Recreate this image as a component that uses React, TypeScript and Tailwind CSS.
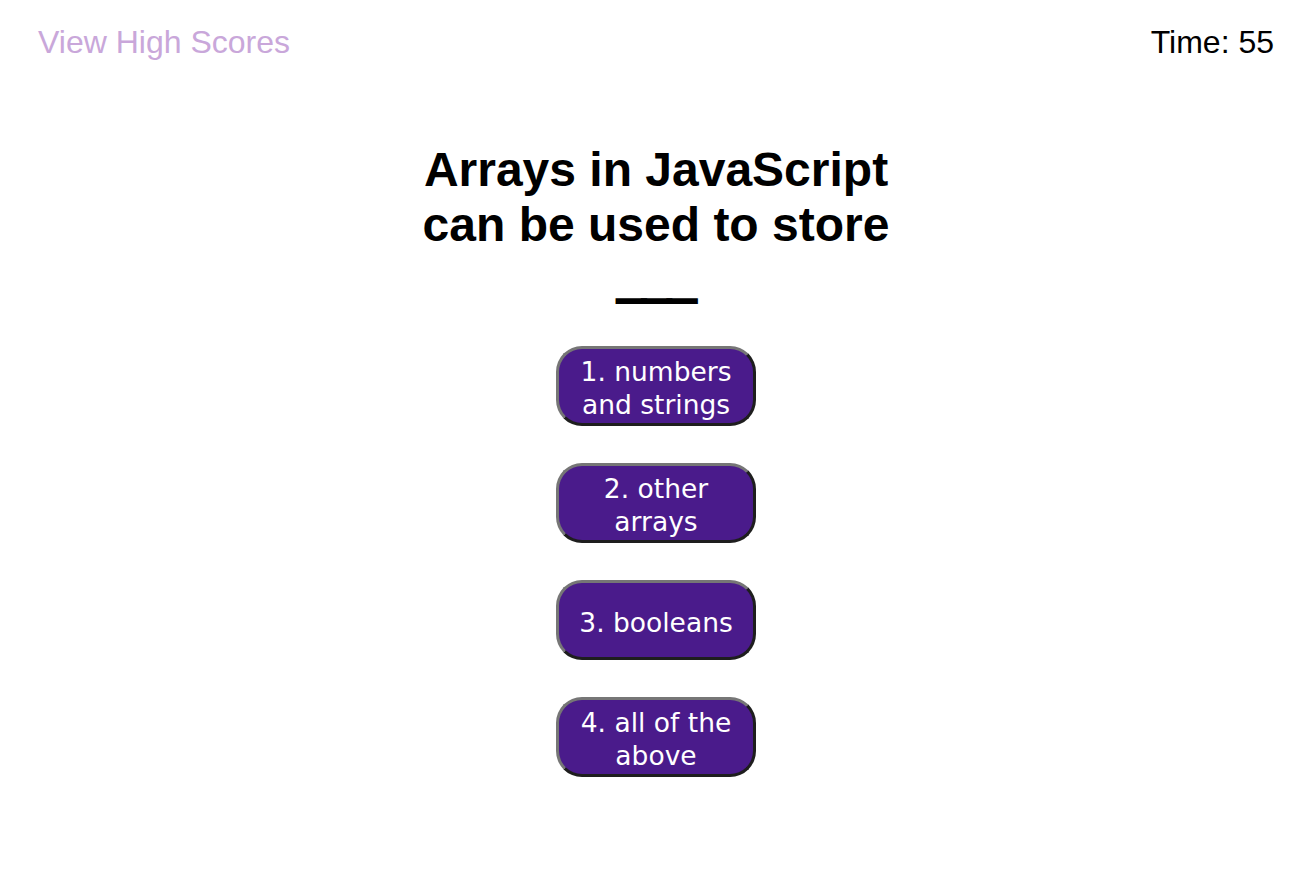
const choices = [
  "1. numbers and strings",
  "2. other arrays",
  "3. booleans",
  "4. all of the above",
];

function Choice({ label }: { label: string }) {
  return (
    <button
      type="button"
      className="w-[200px] h-[80px] px-4 pt-[4px] flex items-center justify-center text-center rounded-[26px] border-[3px] border-t-[#767676] border-l-[#767676] border-b-[#1e1e1e] border-r-[#1e1e1e] bg-[#4a1b8b] text-white text-[26.5px] leading-[33px] font-['DejaVu_Sans',Verdana,sans-serif]"
    >
      {label}
    </button>
  );
}

export default function App() {
  return (
    <div className="min-h-screen bg-white font-['Liberation_Sans',Arial,sans-serif]">
      <header className="flex items-start justify-between pt-[24px] pl-[38px] pr-[42px]">
        <a href="#" className="text-[32px] leading-[37px] text-[#c9a7da]">
          View High Scores
        </a>
        <div className="text-[32px] leading-[37px] text-black">Time: 55</div>
      </header>

      <main className="flex flex-col items-center pr-1 pt-[81px]">
        <h1 className="w-[500px] text-center text-[48px] leading-[55px] font-bold text-black">
          Arrays in JavaScript can be used to store{" "}
          <span className="[-webkit-text-stroke:4px_black] tracking-[-1.3px]">___</span>
        </h1>
        <div className="mt-[39px] flex flex-col items-center gap-[37px]">
          {choices.map((c) => (
            <Choice key={c} label={c} />
          ))}
        </div>
      </main>
    </div>
  );
}
